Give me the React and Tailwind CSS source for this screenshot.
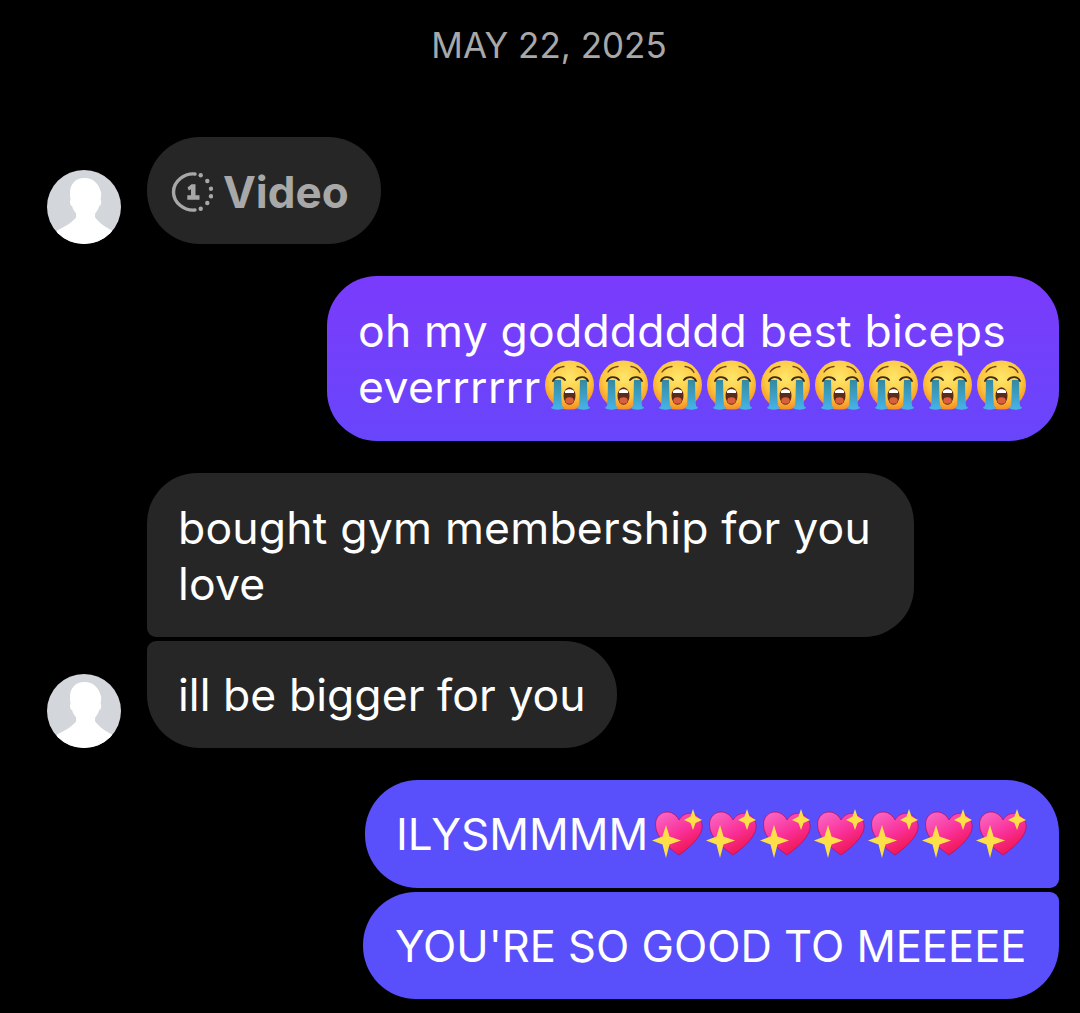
import React from "react";

function Avatar({ id }) {
  return (
    <svg width="74" height="74" viewBox="0 0 74 74" className="shrink-0">
      <defs><clipPath id={`av${id}`}><circle cx="37" cy="37" r="37" /></clipPath></defs>
      <circle cx="37" cy="37" r="37" fill="#d3d6da" />
      <g clipPath={`url(#av${id})`} fill="#fff">
        <path d="M37.500 8c-9 0-14.500 6-14.500 15 0 3 .3 5 .6 7-.8.4-.8 2.500-.3 4 .3 1.200 1 2 1.800 2.200.8 3 2.400 5.500 4 7.300v4c-4 5-11 9-19 13l-5 20h66l-6-20c-8-4-13-8-17-13v-4c1.600-1.800 3.200-4.300 4-7.300.8-.2 1.500-1 1.800-2.200.5-1.500.5-3.600-.3-4 .3-2 .6-4 .6-7C52 14 46.500 8 37.500 8z" />
      </g>
    </svg>
  );
}

function ReplayIcon() {
  return (
    <svg width="42" height="42" viewBox="0 0 42 42" className="shrink-0">
      <path d="M24 4C13.500 3 2.500 11 2.500 22S13.500 41 24 40" fill="none" stroke="#a8a8a8" strokeWidth="3.400" strokeLinecap="round" />
      <g fill="#a8a8a8">
        <circle cx="29.700" cy="5.300" r="2.200" />
        <circle cx="36.300" cy="11" r="2.200" />
        <circle cx="40" cy="18.700" r="2.200" />
        <circle cx="40" cy="26.300" r="2.200" />
        <circle cx="36.300" cy="33" r="2.200" />
        <circle cx="29.700" cy="38.700" r="2.200" />
        <path d="M16.500 17.500l4-3.200h4v11h4v4.400H16.300v-4.400h3.700v-6l-2.200 1.200z" />
      </g>
    </svg>
  );
}

function CryEmoji({ id }) {
  return (
    <svg width="50" height="52" viewBox="0 0 50 52" className="shrink-0">
      <defs>
        <radialGradient id={`f${id}`} cx="50%" cy="35%" r="65%">
          <stop offset="0" stopColor="#ffe66a" />
          <stop offset="0.65" stopColor="#fdc63e" />
          <stop offset="1" stopColor="#f58d24" />
        </radialGradient>
        <linearGradient id={`t${id}`} x1="0" y1="0" x2="0" y2="1">
          <stop offset="0" stopColor="#35899f" />
          <stop offset="1" stopColor="#46b4e8" />
        </linearGradient>
      </defs>
      <circle cx="24.500" cy="25" r="24.500" fill={`url(#f${id})`} />
      <path d="M9 12c2-3 5-5 10-5.500M32 6.500c5 .5 7.500 3 9 6" fill="none" stroke="#6b431f" strokeWidth="1.300" strokeLinecap="round" />
      <path d="M6 48c0-1 1.200-1 2-2 1-8 .6-18 1-26h7c.4 8 .2 18 1 26 .8 1 2 1 2 2-3 2.200-10 2.200-13 0z" fill={`url(#t${id})`} />
      <path d="M32 48c0-1 1.200-1 2-2 .8-8 .6-18 1-26h7c.4 8 0 18 1 26 .8 1 2 1 2 2-3 2.200-10 2.200-13 0z" fill={`url(#t${id})`} />
      <path d="M8 21c2-5 9-5 12-1M31 20c3-4 10-4 12 1" fill="none" stroke="#3d2a16" strokeWidth="1.900" strokeLinecap="round" />
      <ellipse cx="24.500" cy="36" rx="6" ry="8.800" fill="#5b2a18" />
      <path d="M20 31c2-2.500 7-2.500 9 0v2h-9z" fill="#fff" />
      <ellipse cx="24.500" cy="40.500" rx="4.200" ry="3.200" fill="#d9603f" />
    </svg>
  );
}

function Sparkle({ id }) {
  return (
    <svg width="54" height="50" viewBox="0 0 54 50" className="shrink-0">
      <defs>
        <linearGradient id={`h${id}`} x1="0.100" y1="0" x2="0.700" y2="1">
          <stop offset="0" stopColor="#f968c6" />
          <stop offset="0.55" stopColor="#f92f97" />
          <stop offset="1" stopColor="#ee1244" />
        </linearGradient>
      </defs>
      <path d="M27 46C16 38 4 29 3.500 16 3.200 7 10 2.500 16 3c5 .4 9 4 11 8 3-5 8-7.500 13-6.500 7 1.500 11 8 10 15-1.500 9-12 19-23 26.500z" fill={`url(#h${id})`} stroke="#b4126a" strokeWidth="0.800" />
      <path d="M14 14l3.500 11.500L29 29.500l-11.500 4L14 47l-3.500-13.500L0 29.500l10.500-4z" fill="#fde047" transform="translate(0 2)" />
      <path d="M41 0l2.500 7.500L50 11l-6.500 3L41 21l-2.500-7L32 11l6.500-3.500z" fill="#fde047" />
    </svg>
  );
}

const bubbleText = "text-[44.500px] leading-[56px] tracking-[0.2px] text-white";

export default function App() {
  return (
    <div
      className="w-[1080px] h-[1013px] overflow-hidden bg-black flex flex-col px-[21px]"
      style={{ fontFamily: '"Inter", "Liberation Sans", sans-serif' }}
    >
      <div className="pt-[25px] h-[137px] text-center pl-[18px] text-[35px] leading-[40px] text-[#a8a8a8]">
        MAY 22, 2025
      </div>

      <div className="flex items-end gap-[26px] pl-[26px]">
        <Avatar id="a" />
        <div className="h-[107px] w-[234px] rounded-[53px] bg-[#262626] flex items-center pl-[24px] gap-[10px]">
          <ReplayIcon />
          <span className="text-[44px] font-bold text-[#a8a8a8] leading-none pt-[2px]">Video</span>
        </div>
      </div>

      <div className="flex justify-end mt-[32px]">
        <div className="w-[732px] h-[165px] rounded-[50px] bg-gradient-to-b from-[#7a3bfb] to-[#6845fb] pl-[31px] pt-[27px]">
          <div className={bubbleText}>oh my goddddddd best biceps</div>
          <div className="flex items-center h-[56px]">
            <span className="text-[44.500px] leading-[56px] tracking-[0.4px] text-white w-[187px] shrink-0">everrrrrr</span>
            <div className="flex gap-[4px] relative top-[-1px]">
              {[0, 1, 2, 3, 4, 5, 6, 7, 8].map((i) => <CryEmoji key={i} id={i} />)}
            </div>
          </div>
        </div>
      </div>

      <div className="ml-[126px] mt-[32px] w-[767px] h-[164px] rounded-t-[50px] rounded-br-[50px] rounded-bl-[9px] bg-[#262626] pl-[31px] pt-[27px]">
        <div className={bubbleText}>bought gym membership for you</div>
        <div className={bubbleText}>love</div>
      </div>

      <div className="flex items-end gap-[26px] pl-[26px] mt-[4px]">
        <Avatar id="b" />
        <div className="h-[107px] w-[470px] rounded-tl-[9px] rounded-r-[53px] rounded-bl-[53px] bg-[#262626] pl-[31px] flex items-center">
          <span className="text-[44.500px] leading-[56px] tracking-[0.05px] text-white">ill be bigger for you</span>
        </div>
      </div>

      <div className="flex justify-end mt-[32px]">
        <div className="w-[694px] h-[108px] rounded-t-[53px] rounded-bl-[53px] rounded-br-[9px] bg-[#594ffb] pl-[31px] flex items-center">
          <span className="text-[44px] leading-[56px] text-white w-[256px] shrink-0">ILYSMMMM</span>
          <div className="flex">
            {[0, 1, 2, 3, 4, 5, 6].map((i) => <Sparkle key={i} id={i} />)}
          </div>
        </div>
      </div>

      <div className="flex justify-end mt-[4px]">
        <div className="w-[696px] h-[107px] rounded-l-[53px] rounded-br-[53px] rounded-tr-[9px] bg-[#594ffb] pl-[32px] flex items-center">
          <span className="text-[43.500px] leading-[56px] text-white">YOU'RE SO GOOD TO MEEEEE</span>
        </div>
      </div>
    </div>
  );
}
